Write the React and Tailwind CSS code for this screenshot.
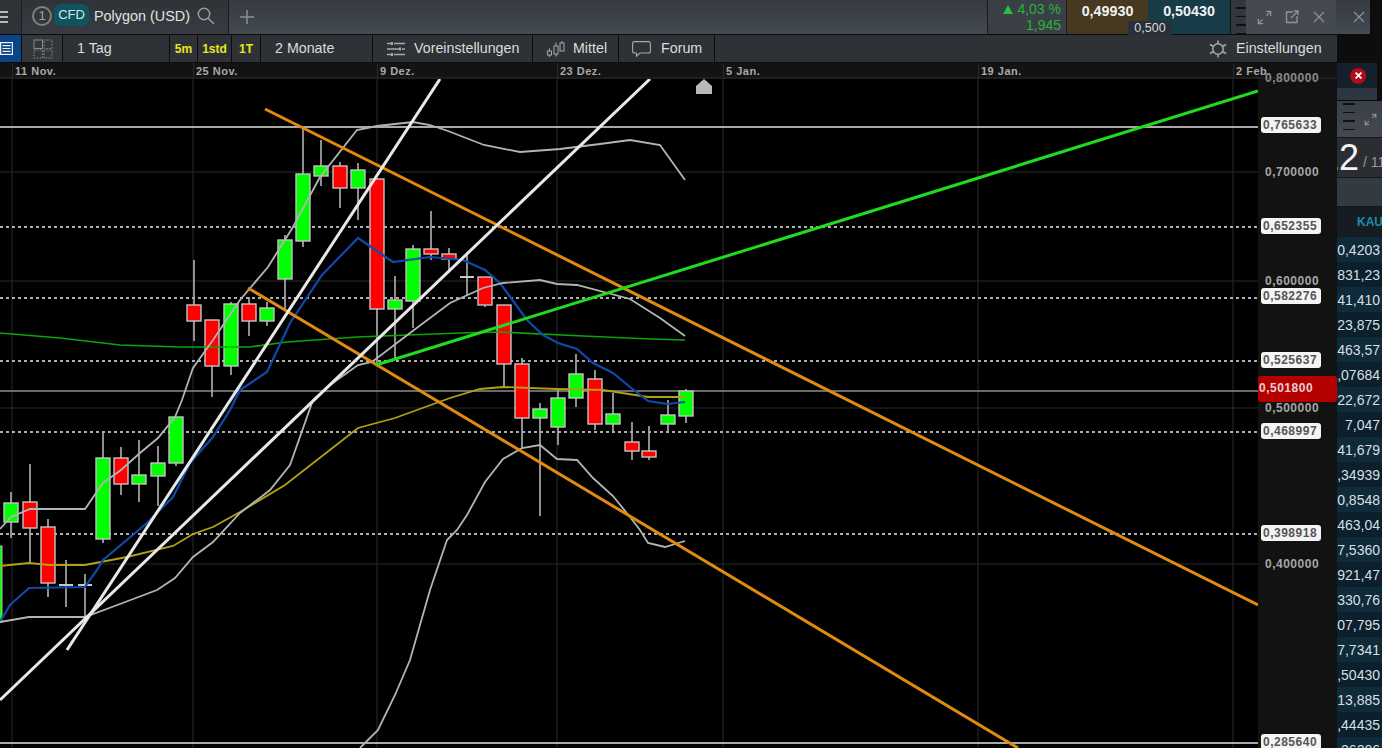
import React from "react";

const candles = [
  [11, 492, 538, 503, 522, "g"], [30, 464, 563, 502, 528, "r"], [48, 519, 597, 527, 583, "r"],
  [66, 560, 607, 584, 586, "d"], [85, 574, 617, 584, 586, "d"], [103, 432, 543, 458, 539, "g"],
  [121, 447, 495, 458, 484, "r"], [139, 440, 502, 475, 484, "g"], [158, 446, 506, 463, 476, "g"],
  [176, 417, 466, 417, 463, "g"], [194, 260, 341, 305, 321, "r"], [212, 320, 397, 320, 366, "r"],
  [231, 302, 375, 304, 366, "g"], [249, 297, 336, 304, 321, "r"], [267, 302, 326, 308, 321, "g"],
  [285, 235, 310, 240, 279, "g"], [303, 128, 247, 174, 241, "g"], [321, 140, 186, 166, 176, "g"],
  [340, 162, 208, 166, 188, "r"], [358, 163, 220, 170, 188, "g"], [377, 179, 363, 179, 309, "r"],
  [395, 276, 360, 300, 309, "g"], [413, 245, 328, 249, 301, "g"], [431, 211, 260, 249, 254, "r"],
  [449, 248, 270, 254, 259, "r"], [467, 253, 295, 276, 278, "d"], [485, 277, 307, 277, 305, "r"],
  [504, 305, 388, 305, 364, "r"], [522, 358, 448, 364, 418, "r"], [540, 403, 516, 409, 418, "g"],
  [558, 388, 445, 398, 427, "g"], [576, 354, 407, 374, 398, "g"], [595, 370, 430, 379, 424, "r"],
  [613, 393, 431, 414, 424, "g"], [632, 422, 460, 442, 451, "r"], [649, 426, 460, 451, 457, "r"],
  [668, 400, 431, 415, 424, "g"], [686, 389, 423, 391, 416, "g"],
];

const upper = "0,529 11,517 30,509 85,509 103,483 121,470 140,453 158,438 175,417 182,400 193,368 213,340 240,300 268,267 293,227 320,177 357,130 377,126 413,122 430,125 448,131 484,145 520,152 560,149 600,144 630,140 660,145 685,180";
const middle = "0,622 29,617 85,617 120,604 157,590 175,578 193,557 213,542 240,513 270,490 290,465 313,400 330,385 358,365 372,362 410,333 450,303 483,288 503,283 540,280 557,284 577,285 630,299 660,318 685,336";
const lower = "360,748 378,730 395,695 410,660 430,590 447,540 457,530 467,515 485,482 503,459 522,448 540,445 557,459 577,460 593,478 613,496 630,517 640,530 648,543 665,547 685,541";
const blue = "0,622 10,605 29,588 85,587 97,570 103,560 147,523 173,497 190,463 213,437 230,410 240,390 267,372 290,323 322,275 358,238 393,262 430,257 463,260 485,270 500,283 527,320 543,335 558,343 577,349 593,363 613,373 630,387 648,401 667,404 685,402";
const yellow = "0,566 29,563 50,565 85,565 127,557 173,546 193,534 213,527 240,512 285,485 358,428 395,418 450,398 480,389 503,387 557,389 603,390 648,397 685,397";
const dgreen = "0,333 60,338 120,345 180,347 250,347 287,342 357,337 460,333 500,332 583,336 650,339 685,340";

const dates = [["11 Nov.", 12], ["25 Nov.", 193], ["9 Dez.", 377], ["23 Dez.", 557], ["5 Jan.", 723], ["19 Jan.", 978], ["2 Feb.", 1233]];
const boxLabels = [["0,765633", 117], ["0,652355", 218], ["0,582276", 288], ["0,525637", 352], ["0,468997", 423], ["0,398918", 525], ["0,285640", 734]];
const plainLabels = [["0,700000", 172], ["0,600000", 281], ["0,500000", 408], ["0,400000", 564]];
const rows = ["0,4203", "831,23", "41,410", "23,875", "463,57", ",07684", "22,672", "7,047", "41,679", ",34939", "0,8548", "463,04", "7,5360", "921,47", "330,76", "07,795", "7,7341", ",50430", "13,885", ",44435", ",26206"];

function Expand({ className }) {
  return (
    <svg viewBox="0 0 16 16" className={className} fill="none" stroke="currentColor" strokeWidth="1.4">
      <path d="M1.5 14.5 L6 10 M10 6 L14.5 1.5 M9.5 1.5 H14.5 V6.5 M1.5 9.5 V14.5 H6.5" />
    </svg>
  );
}

function Cross({ className, width = 1.2 }) {
  return (
    <svg viewBox="0 0 12 12" className={className} fill="none" stroke="currentColor" strokeWidth={width}>
      <path d="M1 1 L11 11 M11 1 L1 11" />
    </svg>
  );
}

function Cell({ className = "", children }) {
  return <div className={"flex h-full shrink-0 items-center border-r border-[#0c0c0c] " + className}>{children}</div>;
}

function Chart() {
  return (
    <svg viewBox="0 79 1258 669" className="block h-[669px] w-[1258px]">
      <rect x="0" y="79" width="1258" height="669" fill="#000" />
      {dates.map(([, x]) => (
        <line key={x} x1={x} x2={x} y1="79" y2="748" stroke="#2a2a2a" strokeWidth="1" />
      ))}
      {[172, 281, 408, 564].map((y) => (
        <line key={y} x1="0" x2="1258" y1={y} y2={y} stroke="#2a2a2a" strokeWidth="1" />
      ))}
      {[227, 298, 361, 432, 534].map((y) => (
        <line key={y} x1="0" x2="1258" y1={y} y2={y} stroke="#e6e6e6" strokeWidth="1.7" strokeDasharray="3 3" />
      ))}
      <line x1="0" x2="1258" y1="127" y2="127" stroke="#e0e0e0" strokeWidth="1.7" />
      <line x1="0" x2="1258" y1="391" y2="391" stroke="#8c8c8c" strokeWidth="1.4" />
      <line x1="0" x2="1258" y1="743" y2="743" stroke="#e0e0e0" strokeWidth="1.7" />
      <rect x="-2" y="546" width="4" height="76" fill="#00ff00" stroke="#bbb" strokeWidth="1" />
      {candles.map(([x, hi, lo, top, bot, c]) => (
        <g key={x}>
          <line x1={x} x2={x} y1={hi} y2={lo} stroke="#a8a8a8" strokeWidth="1.7" />
          {c === "d" ? (
            <line x1={x - 7} x2={x + 7} y1={top + 1} y2={top + 1} stroke="#c8c8c8" strokeWidth="2" />
          ) : (
            <rect x={x - 7} y={top} width="14" height={bot - top} fill={c === "g" ? "#00ff00" : "#ff0000"} stroke="#c4c4c4" strokeWidth="1.4" />
          )}
        </g>
      ))}
      <polyline points={dgreen} fill="none" stroke="#0aa50a" strokeWidth="1.7" />
      <polyline points={yellow} fill="none" stroke="#b3a114" strokeWidth="1.8" />
      <polyline points={blue} fill="none" stroke="#0f4aa8" strokeWidth="2.2" />
      <polyline points={upper} fill="none" stroke="#b4b4b4" strokeWidth="1.8" />
      <polyline points={middle} fill="none" stroke="#b4b4b4" strokeWidth="1.8" />
      <polyline points={lower} fill="none" stroke="#b4b4b4" strokeWidth="1.8" />
      <line x1="265" y1="109" x2="1258" y2="605" stroke="#e08a10" strokeWidth="3" />
      <line x1="248" y1="288" x2="1018" y2="748" stroke="#e08a10" strokeWidth="3" />
      <line x1="67" y1="650" x2="440" y2="79" stroke="#e8e8e8" strokeWidth="3" />
      <line x1="0" y1="700" x2="650" y2="79" stroke="#e8e8e8" strokeWidth="3" />
      <line x1="376" y1="365" x2="1258" y2="91" stroke="#1fdc1f" strokeWidth="3" />
      <path d="M696 94 V86 L704 79 L712 86 V94 Z" fill="#b9b9b9" />
    </svg>
  );
}

export default function App() {
  return (
    <div className="relative flex h-[748px] w-[1382px] flex-col overflow-hidden bg-[#0d0d0d] font-['Liberation_Sans',Arial,sans-serif]">
      {/* top bar */}
      <div className="flex h-[35px] shrink-0 border-b border-[#0a0a0a] bg-gradient-to-b from-[#363a41] to-[#444a53]">
        <div className="flex w-[22px] shrink-0 flex-col justify-center gap-[3px] border-r border-[#1c1c1c] bg-[#2f3338] pr-[13px]">
          <div className="h-[2px] bg-[#b8b8b8]" />
          <div className="h-[2px] bg-[#b8b8b8]" />
          <div className="h-[2px] bg-[#b8b8b8]" />
        </div>
        <div className="flex w-[207px] shrink-0 items-center border-r border-[#1c1c1c] bg-gradient-to-b from-[#2f3338] to-[#383c42] pl-[10px]">
          <div className="-mt-[2px] flex h-[20px] w-[20px] items-center justify-center rounded-full border-2 border-[#7f7f7f] text-[13px] text-[#a0a0a0]">1</div>
          <div className="ml-[2px] -mt-[4px] flex h-[22px] w-[35px] items-center justify-center rounded-[7px] bg-[#0e5560] text-[13px] text-[#d5e6ea]">CFD</div>
          <span className="ml-[5px] -mt-[1px] text-[14.4px] text-[#e2e2e2]">Polygon (USD)</span>
          <svg viewBox="0 0 18 18" className="ml-[7px] -mt-[3px] h-[18px] w-[18px] text-[#9a9a9a]" fill="none" stroke="currentColor" strokeWidth="1.5">
            <circle cx="7" cy="7" r="5.7" />
            <path d="M11 11 L17 17" />
          </svg>
        </div>
        <div className="ml-[11px] flex w-[14px] items-center justify-center text-[#8b8f95]">
          <svg viewBox="0 0 14 14" className="h-[14px] w-[14px]" fill="none" stroke="currentColor" strokeWidth="1.5">
            <path d="M7 0 V14 M0 7 H14" />
          </svg>
        </div>
        <div className="ml-[733px] flex w-[80px] shrink-0 flex-col items-end border-l border-r border-[#1c1c1c] bg-[#3a3f46] pr-[5px] pt-[1px] text-sm leading-[16px] text-[#2cb13c]">
          <div className="flex items-center gap-[4px]">
            <span className="h-0 w-0 border-x-[5px] border-b-[9px] border-x-transparent border-b-[#28c03c]" />
            <span>4,03 %</span>
          </div>
          <span>1,945</span>
        </div>
        <div className="relative flex w-[81px] shrink-0 justify-center bg-[#47391f] pt-[1px] text-[14.3px] font-bold text-[#f2f2f2]">
          0,49930
        </div>
        <div className="flex w-[83px] shrink-0 justify-center border-r border-[#111] bg-[#173b47] pt-[1px] text-[14.3px] font-bold text-[#f2f2f2]">
          0,50430
        </div>
        <div className="flex w-[15px] shrink-0 flex-col gap-[7px] bg-[#33373d] pl-[5px] pt-[7px]">
          <div className="h-[1.5px] bg-[#111]" />
          <div className="h-[1.5px] bg-[#111]" />
          <div className="h-[1.5px] bg-[#111]" />
          <div className="h-[1.5px] bg-[#111]" />
        </div>
        <div className="flex w-[90px] shrink-0 items-center bg-[#454a52] pl-[11px] text-[#8f9398]">
          <Expand className="h-[15px] w-[15px]" />
          <svg viewBox="0 0 14 14" className="ml-[13px] h-[14px] w-[14px]" fill="none" stroke="currentColor" strokeWidth="1.4">
            <path d="M8 2 H1.5 V12.5 H12 V6 M6 8 L13 1 M9 1 H13 V5" />
          </svg>
          <Cross className="ml-[14px] h-[12px] w-[12px]" />
        </div>
        <div className="flex flex-1 items-center border-r-[12px] border-[#0d0d0d] pl-[17px] text-[#8f9398]">
          <Cross className="h-[12px] w-[12px]" />
        </div>
      </div>

      {/* 0,500 spread tab */}
      <div className="absolute left-[1128px] top-[21px] flex h-[14px] w-[44px] items-center justify-center rounded-t-[3px] bg-[#28303a] text-[12.5px] text-[#d8d8d8]">0,500</div>

      <div className="flex min-h-0 flex-1">
        <div className="flex w-[1337px] shrink-0 flex-col">
          {/* toolbar */}
          <div className="flex h-[28px] shrink-0 items-center border-b border-[#0c0c0c] bg-[#2e3237] text-[14.25px] text-[#dcdcdc]">
            <Cell className="w-[22px] justify-center bg-[#0c4585]">
              <svg viewBox="0 0 13 13" className="-ml-[9px] h-[13px] w-[13px]" fill="none" stroke="#e8f0f8" strokeWidth="1.2">
                <rect x="0.6" y="0.6" width="11.8" height="11.8" />
                <path d="M2.5 3.7 H10.5 M2.5 6.5 H10.5 M2.5 9.3 H10.5" />
              </svg>
            </Cell>
            <Cell className="w-[41px] justify-center bg-[#33373c] pl-[2px]">
              <svg viewBox="0 0 20 20" className="h-[20px] w-[20px]" fill="none" stroke="#8a8a8a" strokeWidth="1">
                <rect x="1" y="1" width="8.5" height="8.5" />
                <rect x="11" y="1" width="8" height="8.5" strokeDasharray="1.5 1.5" />
                <rect x="1" y="11" width="8.5" height="8" strokeDasharray="1.5 1.5" />
                <rect x="11" y="11" width="8" height="8" strokeDasharray="1.5 1.5" />
              </svg>
            </Cell>
            <Cell className="w-[107px] pl-[14px]">1 Tag</Cell>
            <Cell className="w-[28px] justify-center text-xs font-bold text-[#e8e81c]">5m</Cell>
            <Cell className="w-[34px] justify-center text-xs font-bold text-[#e8e81c]">1std</Cell>
            <Cell className="w-[29px] justify-center text-xs font-bold text-[#e8e81c]">1T</Cell>
            <Cell className="w-[112px] pl-[14px]">2 Monate</Cell>
            <Cell className="w-[160px] pl-[14px]">
              <svg viewBox="0 0 18 16" className="mr-[9px] h-[16px] w-[18px]" fill="none" stroke="#a8a8a8" strokeWidth="1.6">
                <path d="M0 2.5 H4 M7 2.5 H18 M0 8 H12 M15 8 H18 M0 13.5 H4 M7 13.5 H18" />
                <path d="M5 1 V4 M13 6.5 V9.5 M5 12 V15" strokeWidth="2" />
              </svg>
              Voreinstellungen
            </Cell>
            <Cell className="w-[86px] pl-[14px]">
              <svg viewBox="0 0 18 16" className="mr-[8px] h-[16px] w-[18px]" fill="none" stroke="#a8a8a8" strokeWidth="1">
                <rect x="0.5" y="10" width="4" height="4" />
                <path d="M2.5 7.5 V10 M2.5 14 V16 M9 1.5 V5 M9 13 V15.5 M15 0 V2" />
                <rect x="7" y="5" width="4" height="8" />
                <rect x="13" y="2" width="4" height="8" />
              </svg>
              Mittel
            </Cell>
            <Cell className="w-[96px] pl-[13px]">
              <svg viewBox="0 0 19 16" className="mr-[10px] h-[16px] w-[19px]" fill="none" stroke="#a8a8a8" strokeWidth="1.1">
                <path d="M2.5 0.6 H16.5 Q18.4 0.6 18.4 2.5 V10 Q18.4 12 16.5 12 H8 L4.5 15.2 V12 H2.5 Q0.6 12 0.6 10 V2.5 Q0.6 0.6 2.5 0.6 Z" />
              </svg>
              Forum
            </Cell>
            <div className="ml-[494px] flex items-center">
              <svg viewBox="0 0 18 18" className="mr-[9px] h-[18px] w-[18px]" fill="none" stroke="#a8a8a8" strokeWidth="1.5">
                <circle cx="9" cy="9" r="5.2" />
                <path d="M9 0.5 V3.8 M9 14.2 V17.5 M1 4.5 L4.5 6.5 M17 4.5 L13.5 6.5 M1 13.5 L4.5 11.5 M17 13.5 L13.5 11.5" />
              </svg>
              Einstellungen
            </div>
          </div>

          {/* date axis */}
          <div className="relative z-10 h-[16px] shrink-0 border-b-2 border-[#1e1e1e] bg-[#131313]">
            {dates.map(([t, x]) => (
              <React.Fragment key={t}>
                <div className="absolute top-0 h-[16px] w-px bg-[#2a2a2a]" style={{ left: x }} />
                <span className="absolute top-0 text-[11px] font-bold leading-[16px] tracking-[0.5px] text-[#a9a9a9]" style={{ left: x + 3 }}>{t}</span>
              </React.Fragment>
            ))}
            <span className="absolute left-[1265px] top-[8px] text-xs font-bold leading-[14px] tracking-[0.5px] text-[#8a8a8a]">0,800000</span>
          </div>

          {/* chart + price axis */}
          <div className="relative flex min-h-0 flex-1">
            <Chart />
            <div className="absolute bottom-0 left-[1258px] top-0 w-[79px] bg-[#121212]" />
            {plainLabels.map(([t, y]) => (
              <span key={t} className="absolute left-[1265px] text-xs font-bold leading-[14px] tracking-[0.5px] text-[#a6a6a6]" style={{ top: y - 79 - 7 }}>{t}</span>
            ))}
            {boxLabels.map(([t, y]) => (
              <span key={t} className="absolute left-[1261px] h-[16px] w-[60px] rounded-[3px] bg-[#f4f4f4] pl-[2px] text-xs font-bold leading-[16px] tracking-[0.5px] text-[#555]" style={{ top: y - 79 }}>{t}</span>
            ))}
            <span className="absolute left-[1258px] top-[297px] h-[26px] w-[79px] rounded-[3px] bg-[#b50000] pl-[1px] text-xs font-bold leading-[25px] tracking-[0.5px] text-[#e6d0d0]">0,501800</span>
          </div>
        </div>

        {/* right panel */}
        <div className="flex min-w-0 flex-1 flex-col overflow-hidden bg-[#0d0d0d]">
          <div className="h-[28px] shrink-0" />
          <div className="flex h-[25px] w-[40px] shrink-0 items-center justify-end bg-[#14212c] pr-[11px]">
            <div className="flex h-[16px] w-[16px] items-center justify-center rounded-full bg-[#b00d1c] text-white">
              <Cross className="h-[7px] w-[7px]" width={3} />
            </div>
          </div>
          <div className="h-[13px] w-[40px] shrink-0 border-b border-[#0a0a0a] bg-[#2d3742]" />
          <div className="flex h-[37px] shrink-0 border-b border-[#15171a] bg-gradient-to-b from-[#3a3f46] to-[#44494f]">
            <div className="ml-[6px] flex w-[12px] flex-col gap-[7px] pt-[2px]">
              <div className="h-[1.5px] bg-[#111]" />
              <div className="h-[1.5px] bg-[#111]" />
              <div className="h-[1.5px] bg-[#111]" />
              <div className="h-[1.5px] bg-[#111]" />
            </div>
            <Expand className="ml-[9px] mt-[12px] h-[13px] w-[13px] text-[#8f9398]" />
          </div>
          <div className="flex h-[39px] shrink-0 items-center overflow-hidden whitespace-nowrap bg-[#2a2d32]">
            <span className="-ml-[18px] text-[36px] leading-[36px] text-[#f4f4f4]">12</span>
            <span className="ml-[4px] mt-[9px] text-sm text-[#9a9a9a]">/ 11</span>
          </div>
          <div className="h-[30px] shrink-0 border-y border-[#15171a] bg-[#343a42]" />
          <div className="flex h-[30px] shrink-0 items-center overflow-hidden whitespace-nowrap bg-[#151c22] pl-[20px] text-xs font-bold text-[#1a90a8]">KAUF</div>
          {rows.map((r, i) => (
            <div key={i} className={"flex h-[25px] shrink-0 items-center justify-end pr-[2px] text-sm text-[#d8dfe3] " + (i % 2 === 0 ? "bg-[#0f2a38]" : "bg-[#0b202c]")}>
              {r}
            </div>
          ))}
        </div>
      </div>
    </div>
  );
}
